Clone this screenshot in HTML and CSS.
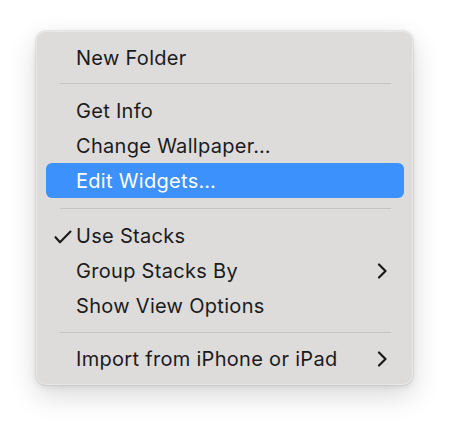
FILE: index.html
```html
<!DOCTYPE html>
<html>
<head>
<meta charset="utf-8">
<link rel="stylesheet" href="styles.css">
</head>
<body>
<div class="menu">
  <div class="item">New Folder</div>
  <div class="sep sep1"></div>
  <div class="item">Get Info</div>
  <div class="item">Change Wallpaper…</div>
  <div class="item active">Edit Widgets…</div>
  <div class="sep sep2"></div>
  <div class="item"><svg class="check" width="18" height="14" viewBox="0 0 18 14"><path d="M1.5 7.2 L6 12.3 L16.5 1.5" fill="none" stroke="#1a1a1a" stroke-width="2.1" stroke-linecap="round" stroke-linejoin="round"/></svg>Use Stacks</div>
  <div class="item">Group Stacks By<svg class="chev" width="10" height="16" viewBox="0 0 10 16"><path d="M2 1.5 L8.5 8 L2 14.5" fill="none" stroke="#1a1a1a" stroke-width="2.2" stroke-linecap="round" stroke-linejoin="round"/></svg></div>
  <div class="item">Show View Options</div>
  <div class="sep sep3"></div>
  <div class="item">Import from iPhone or iPad<svg class="chev" width="10" height="16" viewBox="0 0 10 16"><path d="M2 1.5 L8.5 8 L2 14.5" fill="none" stroke="#1a1a1a" stroke-width="2.2" stroke-linecap="round" stroke-linejoin="round"/></svg></div>
</div>
</body>
</html>
```

FILE: styles.css
```css
html, body {
  margin: 0;
  padding: 0;
  background: #ffffff;
}
body {
  width: 450px;
  height: 429px;
  overflow: hidden;
}
.menu {
  margin: 31px 0 0 36px;
  width: 377px;
  height: 354px;
  box-sizing: border-box;
  padding: 9px 9px 8px 10px;
  background: #dddcdb;
  border-radius: 10px;
  box-shadow: 0 0 0 1px rgba(0,0,0,0.06), inset 0 0 0 1px rgba(255,255,255,0.35), 0 10px 28px rgba(0,0,0,0.16), 0 2px 6px rgba(0,0,0,0.08);
  font-family: Inter, "Noto Sans", sans-serif;
  font-size: 20px;
  color: #1b1b1b;
  display: flex;
  flex-direction: column;
}
.item {
  position: relative;
  height: 35px;
  flex: none;
  display: flex;
  align-items: center;
  padding-left: 30px;
  padding-right: 17px;
  border-radius: 6px;
  letter-spacing: 0.3px;
}
.item.active {
  background: #3d91fc;
  color: #ffffff;
}
.check {
  position: absolute;
  left: 8px;
  top: 11px;
}
.chev {
  margin-left: auto;
}
.sep {
  height: 1px;
  flex: none;
  margin-left: 14px;
  margin-right: 13px;
  background: #c4c3c2;
}
.sep1 { margin-top: 8px; margin-bottom: 9px; }
.sep2 { margin-top: 10px; margin-bottom: 9.5px; }
.sep3 { margin-top: 8.5px; margin-bottom: 8.5px; }
```
